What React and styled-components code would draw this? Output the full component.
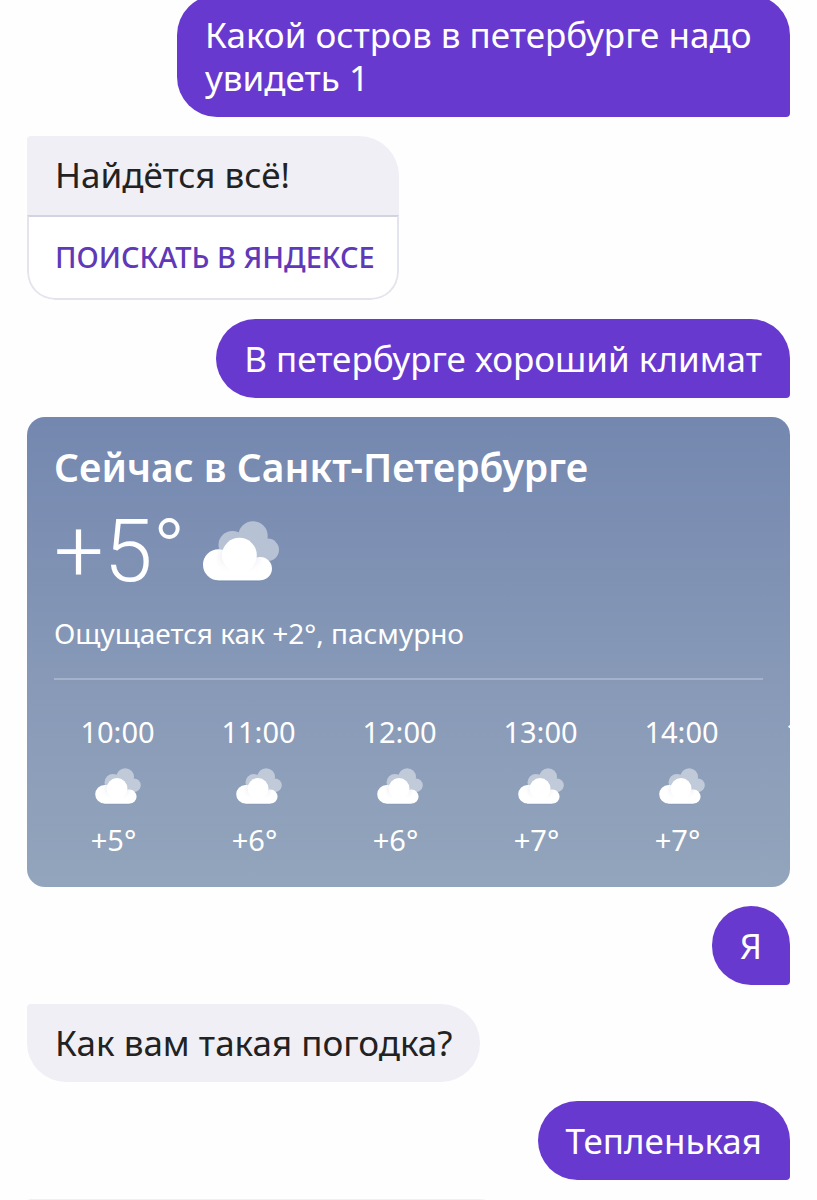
import React from 'react'
import styled, { createGlobalStyle } from 'styled-components'

const GlobalStyle = createGlobalStyle`
    * {
        box-sizing: border-box;
    }
    body {
        margin: 0;
        background: #fefefe;
        font-family: 'Noto Sans', 'Open Sans', sans-serif;
    }
`

const Screen = styled.div`
    height: 100vh;
    overflow: hidden;
`

/* the feed is scrolled a little, so its first bubble starts above the screen */
const Feed = styled.main`
    display: flex;
    flex-direction: column;
    align-items: flex-start;
    gap: 19px;
    margin-top: -5px;
    padding: 0 27px;
`

const Bubble = styled.div`
    flex-shrink: 0;
    font-size: 35px;
    line-height: 43px;
`

const UserBubble = styled(Bubble)`
    align-self: flex-end;
    margin-left: 150px;
    padding: 18px 28px;
    border-radius: 40px 40px 4px 40px;
    background: #6839cf;
    color: #fff;
`

const BotBubble = styled(Bubble)`
    padding: 17px 28px 18px;
    border-radius: 4px 40px 40px 40px;
    background: #f0eff5;
    color: #222;
`

const NextBubble = styled(BotBubble)`
    width: 490px;
    height: 78px;
`

const SearchCard = styled.div`
    flex-shrink: 0;
    border-radius: 4px 40px 28px 28px;
    overflow: hidden;
    background: #fff;

    p {
        margin: 0;
        padding: 17px 28px 19px;
        background: #f0eff5;
        color: #222;
        font-size: 35px;
        line-height: 43px;
    }
`

const SearchButton = styled.button`
    display: block;
    width: 100%;
    padding: 20px 22px 21px 26px;
    border: 2px solid #e4e4ec;
    border-top-color: #d2d3e0;
    border-radius: 0 0 28px 28px;
    background: #fff;
    color: #6039b8;
    font-family: inherit;
    font-size: 29px;
    font-weight: 500;
    line-height: 40px;
    text-align: left;
    text-transform: uppercase;
`

const Weather = styled.section`
    flex-shrink: 0;
    width: 100%;
    padding: 27px 27px 26px;
    border-radius: 18px;
    overflow: hidden;
    background: linear-gradient(#7487af, #8799b7 55%, #93a5bc);
    color: #fff;
`

const City = styled.h2`
    margin: 0;
    font-size: 39px;
    font-weight: 600;
    line-height: 46px;
    white-space: nowrap;
`

const Now = styled.div`
    display: flex;
    align-items: center;
    gap: 17px;
    margin-top: 14px;
    font-family: Roboto, sans-serif;
    font-size: 88px;
    font-weight: 300;
    line-height: 94px;
`

const Feels = styled.p`
    margin: 15px 0 0;
    padding-bottom: 25px;
    border-bottom: 2px solid rgba(255, 255, 255, 0.25);
    font-size: 28px;
    line-height: 40px;
`

const Hours = styled.ul`
    display: flex;
    gap: 14px;
    margin: 32px -27px 0 0;
    padding: 0;
    overflow: hidden;
    list-style: none;
`

const Hour = styled.li`
    display: flex;
    flex: 0 0 127px;
    flex-direction: column;
    align-items: center;
    font-size: 29px;
    line-height: 40px;

    svg {
        margin: 16px 0;
    }
`

const Degrees = styled.span`
    padding: 0 8px 1px 0;
`

const hours = [
    { time: '10:00', temp: '+5°' },
    { time: '11:00', temp: '+6°' },
    { time: '12:00', temp: '+6°' },
    { time: '13:00', temp: '+7°' },
    { time: '14:00', temp: '+7°' },
    { time: '15:00', temp: '+7°' },
]

function Cloud({ width, height }) {
    return (
        <svg width={width} height={height} viewBox='0 0 76 60' overflow='visible' aria-hidden='true'>
            <defs>
                <radialGradient id='puff' gradientUnits='userSpaceOnUse' cx='36.4' cy='36' r='24'>
                    <stop offset='0.7' stopColor='#f4f4f9' />
                    <stop offset='1' stopColor='#fff' />
                </radialGradient>
                <linearGradient id='base' x1='0' y1='0' x2='0' y2='1'>
                    <stop offset='0' stopColor='#fff' stopOpacity='0' />
                    <stop offset='0.6' stopColor='#fff' />
                </linearGradient>
            </defs>
            <g opacity='0.45' fill='#fff'>
                <circle cx='50' cy='15' r='14.7' />
                <circle cx='64.8' cy='28.8' r='11.2' />
                <circle cx='29.5' cy='24' r='14' />
                <path d='M29 20 L50 12 L66 22 V39 H32z' />
            </g>
            <path d='M15 60 H57' stroke='#5f7196' strokeOpacity='0.25' strokeWidth='1.5' />
            <path
                fill='url(#puff)'
                d='M15.5 28.2 C18.5 28.2 21 29 23 30 L52 37 C54 36 56 36 57.4 36 A11.6 11.6 0 0 1 57.4 59.2 H15.5 A15.5 15.5 0 0 1 15.5 28.2z'
            />
            <circle cx='36.4' cy='34.2' r='17.4' fill='#fff' />
            <path fill='url(#base)' d='M15 38 H57 V59.2 H15z' />
        </svg>
    )
}

export default function App() {
    return (
        <Screen>
            <GlobalStyle />
            <Feed>
                <UserBubble>Какой остров в петербурге надо увидеть 1</UserBubble>

                <SearchCard>
                    <p>Найдётся всё!</p>
                    <SearchButton type='button'>Поискать в Яндексе</SearchButton>
                </SearchCard>

                <UserBubble>В петербурге хороший климат</UserBubble>

                <Weather>
                    <City>Сейчас в Санкт-Петербурге</City>
                    <Now>
                        <span>+5°</span>
                        <Cloud width={76} height={60} />
                    </Now>
                    <Feels>Ощущается как +2°, пасмурно</Feels>
                    <Hours>
                        {hours.map(({ time, temp }) => (
                            <Hour key={time}>
                                <span>{time}</span>
                                <Cloud width={46} height={36} />
                                <Degrees>{temp}</Degrees>
                            </Hour>
                        ))}
                    </Hours>
                </Weather>

                <UserBubble>Я</UserBubble>
                <BotBubble>Как вам такая погодка?</BotBubble>
                <UserBubble>Тепленькая</UserBubble>
                <NextBubble />
            </Feed>
        </Screen>
    )
}
